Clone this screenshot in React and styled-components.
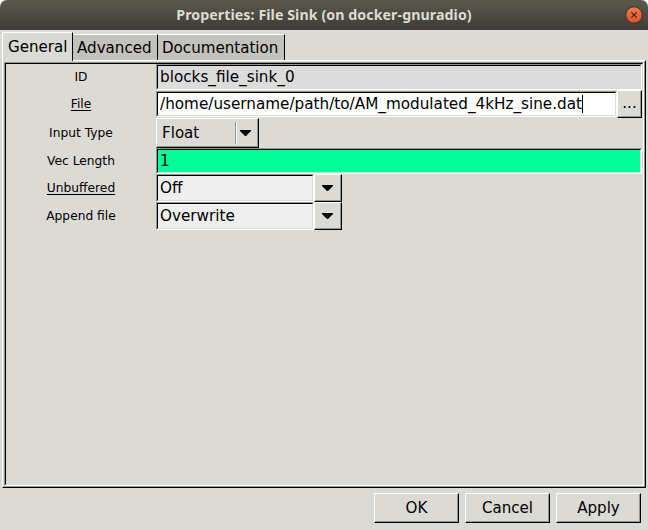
import React from "react";
import styled, { createGlobalStyle } from "styled-components";

const Global = createGlobalStyle`
  * { box-sizing: border-box; }
  body { margin: 0; background: #fff; }
`;

const Window = styled.main`
  width: 648px;
  height: 530px;
  display: flex;
  flex-direction: column;
  background: #dcdad5;
  border-radius: 7px 7px 0 0;
  overflow: hidden;
  color: #000;
  font: 15.1px "DejaVu Sans", sans-serif;
`;

const TitleBar = styled.header`
  height: 30px;
  flex: none;
  display: grid;
  grid-template-columns: 28px 1fr 28px;
  align-items: center;
  background: linear-gradient(#57544a, #5a574c 2px, #3c3b37);
  color: #dfdbd2;
`;

const Title = styled.h1`
  grid-column: 2;
  margin: 0;
  text-align: center;
  font: bold 14.2px/30px "Noto Sans", sans-serif;
  letter-spacing: 0.08px;
  white-space: nowrap;
`;

const CloseButton = styled.button`
  width: 18px;
  height: 18px;
  padding: 0;
  border: 0;
  background: none;
  display: flex;
  margin-left: 5px;
`;

const Tabs = styled.nav`
  height: 30px;
  flex: none;
  display: flex;
  align-items: flex-end;
  padding-left: 2px;
`;

const Tab = styled.button`
  position: relative;
  height: ${(p) => (p.$active ? 29 : 26)}px;
  margin-bottom: ${(p) => (p.$active ? -1 : 0)}px;
  width: ${(p) => p.$width}px;
  padding: 0 0 ${(p) => (p.$active ? 1 : 0)}px ${(p) => (p.$active ? 5 : 3)}px;
  text-align: left;
  border: 0;
  border-top: 1px solid #fff;
  border-left: 1px solid ${(p) => (p.$active ? "#fff" : "#c4c2bd")};
  border-right: 1px solid #000;
  background: ${(p) => (p.$active ? "#dcdad5" : "#c4c2bd")};
  color: #000;
  font: inherit;
  white-space: nowrap;
`;

const Pane = styled.section`
  height: 428px;
  width: 644px;
  flex: none;
  margin-left: 2px;
  border: 1px solid;
  border-color: #fff #000 #000 #fff;
`;

const PaneInner = styled.div`
  height: 100%;
  border: 1px solid;
  border-color: #dcdad5 #96948f #96948f #dcdad5;
`;

const Viewport = styled.div`
  height: 100%;
  border: 1px solid;
  border-color: #96948f #fff #fff #96948f;
`;

const Form = styled.div`
  height: 100%;
  border: 1px solid;
  border-color: #000 #dcdad5 #dcdad5 #000;
  display: grid;
  grid-template-columns: 150px 1fr;
  grid-template-rows: 26px 28px 30px 26px 28px 28px;
`;

const Label = styled.span`
  align-self: center;
  font: 12.25px/14px "DejaVu Sans", sans-serif;
  padding-bottom: 1px;
  text-align: center;
  text-decoration: ${(p) => (p.$changed ? "underline" : "none")};
  text-underline-offset: 2px;
`;

const Field = styled.div`
  display: flex;
  align-items: center;
`;

const Entry = styled.div`
  flex: ${(p) => (p.$width ? "none" : 1)};
  width: ${(p) => (p.$width ? p.$width + "px" : "auto")};
  height: ${(p) => p.$height || 26}px;
  border: 1px solid;
  border-color: #96948f #fff #fff #96948f;
`;

const EntryText = styled.div`
  height: 100%;
  display: flex;
  align-items: center;
  border: 1px solid;
  border-color: #000 #dcdad5 #dcdad5 #000;
  background: ${(p) => p.$fill};
  padding: 0 0 1px 2px;
  font-size: 15.22px;
  white-space: pre;
`;

const Caret = styled.span`
  width: 1px;
  height: 18px;
  background: #000;
`;

const Raised = styled.button`
  width: ${(p) => p.$width}px;
  height: ${(p) => p.$height}px;
  flex: none;
  padding: 0 ${(p) => p.$padRight || 0}px 0 0;
  display: flex;
  align-items: center;
  justify-content: center;
  border: 1px solid;
  border-color: #fff #000 #000 #fff;
  box-shadow: inset -1px -1px #96948f;
  background: #dcdad5;
  color: #000;
  font: inherit;
`;

const ButtonText = styled.span`
  padding-bottom: ${(p) => p.$lift || 0}px;
`;

const OptionText = styled.span`
  flex: 1;
  text-align: left;
  padding: 0 0 1px 5px;
`;

const Divider = styled.span`
  width: 2px;
  height: 22px;
  border-left: 1px solid #96948f;
  border-right: 1px solid #fff;
  margin-right: 3px;
`;

const Actions = styled.footer`
  display: flex;
  justify-content: flex-end;
  gap: 6px;
  padding: 5px 7px 0 0;
`;

const Arrow = () => (
  <svg width="12" height="6" viewBox="0 0 12 6" aria-hidden="true">
    <path d="M0 0H11V1L6 6H5L0 1Z" />
  </svg>
);

const Combo = ({ value }) => (
  <Field>
    <Entry $width={158} $height={28}><EntryText $fill="#eee">{value}</EntryText></Entry>
    <Raised $width={28} $height={28} aria-label="Open list"><Arrow /></Raised>
  </Field>
);

export default function App() {
  return (
    <>
      <Global />
      <Window>
        <TitleBar>
          <Title>Properties: File Sink (on docker-gnuradio)</Title>
          <CloseButton aria-label="Close">
            <svg width="18" height="18" viewBox="0 0 18 18">
              <defs>
                <linearGradient id="close" x2="0" y2="1">
                  <stop stopColor="#f27950" />
                  <stop offset="1" stopColor="#e2531f" />
                </linearGradient>
              </defs>
              <circle cx="9" cy="9" r="8.2" fill="url(#close)" stroke="#35342f" />
              <path d="M6.3 6.3L11.7 11.7M11.7 6.3L6.3 11.7" stroke="#3c2a18" strokeWidth="1.2" />
            </svg>
          </CloseButton>
        </TitleBar>
        <Tabs>
          <Tab $active $width={71}>General</Tab>
          <Tab $width={85}>Advanced</Tab>
          <Tab $width={127}>Documentation</Tab>
        </Tabs>
        <Pane>
          <PaneInner>
            <Viewport>
              <Form>
                <Label>ID</Label>
                <Field><Entry><EntryText $fill="#dcdcdc">blocks_file_sink_0</EntryText></Entry></Field>
                <Label $changed>File</Label>
                <Field>
                  <Entry><EntryText $fill="#fff">/home/username/path/to/AM_modulated_4kHz_sine.dat<Caret /></EntryText></Entry>
                  <Raised $width={25} $height={28}><ButtonText $lift={2}>...</ButtonText></Raised>
                </Field>
                <Label>Input Type</Label>
                <Field>
                  <Raised $width={103} $height={30} $padRight={6}>
                    <OptionText>Float</OptionText><Divider /><Arrow />
                  </Raised>
                </Field>
                <Label>Vec Length</Label>
                <Field><Entry><EntryText $fill="#00ff99">1</EntryText></Entry></Field>
                <Label $changed>Unbuffered</Label>
                <Combo value="Off" />
                <Label>Append file</Label>
                <Combo value="Overwrite" />
              </Form>
            </Viewport>
          </PaneInner>
        </Pane>
        <Actions>
          <Raised $width={85} $height={30}><ButtonText>OK</ButtonText></Raised>
          <Raised $width={85} $height={30}><ButtonText>Cancel</ButtonText></Raised>
          <Raised $width={85} $height={30}><ButtonText>Apply</ButtonText></Raised>
        </Actions>
      </Window>
    </>
  );
}
